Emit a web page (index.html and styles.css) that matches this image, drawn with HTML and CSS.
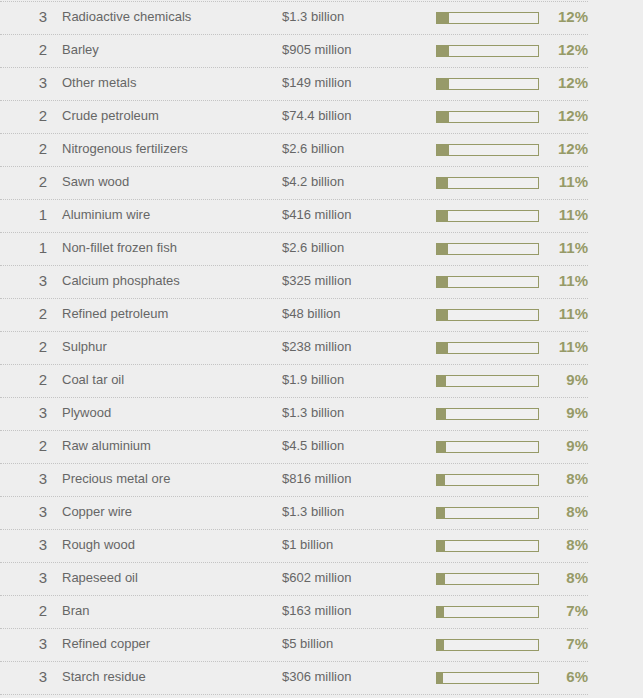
FILE: index.html
```html
<!DOCTYPE html>
<html>
<head>
<meta charset="utf-8">
<link rel="stylesheet" href="styles.css">
</head>
<body>
<div class="table">
  <div class="row"><span class="num">3</span><span class="name">Radioactive chemicals</span><span class="val">$1.3 billion</span><span class="bar"><span class="fill" style="width:12%"></span></span><span class="pct">12%</span></div>
  <div class="row"><span class="num">2</span><span class="name">Barley</span><span class="val">$905 million</span><span class="bar"><span class="fill" style="width:12%"></span></span><span class="pct">12%</span></div>
  <div class="row"><span class="num">3</span><span class="name">Other metals</span><span class="val">$149 million</span><span class="bar"><span class="fill" style="width:12%"></span></span><span class="pct">12%</span></div>
  <div class="row"><span class="num">2</span><span class="name">Crude petroleum</span><span class="val">$74.4 billion</span><span class="bar"><span class="fill" style="width:12%"></span></span><span class="pct">12%</span></div>
  <div class="row"><span class="num">2</span><span class="name">Nitrogenous fertilizers</span><span class="val">$2.6 billion</span><span class="bar"><span class="fill" style="width:12%"></span></span><span class="pct">12%</span></div>
  <div class="row"><span class="num">2</span><span class="name">Sawn wood</span><span class="val">$4.2 billion</span><span class="bar"><span class="fill" style="width:11%"></span></span><span class="pct">11%</span></div>
  <div class="row"><span class="num">1</span><span class="name">Aluminium wire</span><span class="val">$416 million</span><span class="bar"><span class="fill" style="width:11%"></span></span><span class="pct">11%</span></div>
  <div class="row"><span class="num">1</span><span class="name">Non-fillet frozen fish</span><span class="val">$2.6 billion</span><span class="bar"><span class="fill" style="width:11%"></span></span><span class="pct">11%</span></div>
  <div class="row"><span class="num">3</span><span class="name">Calcium phosphates</span><span class="val">$325 million</span><span class="bar"><span class="fill" style="width:11%"></span></span><span class="pct">11%</span></div>
  <div class="row"><span class="num">2</span><span class="name">Refined petroleum</span><span class="val">$48 billion</span><span class="bar"><span class="fill" style="width:11%"></span></span><span class="pct">11%</span></div>
  <div class="row"><span class="num">2</span><span class="name">Sulphur</span><span class="val">$238 million</span><span class="bar"><span class="fill" style="width:11%"></span></span><span class="pct">11%</span></div>
  <div class="row"><span class="num">2</span><span class="name">Coal tar oil</span><span class="val">$1.9 billion</span><span class="bar"><span class="fill" style="width:9%"></span></span><span class="pct">9%</span></div>
  <div class="row"><span class="num">3</span><span class="name">Plywood</span><span class="val">$1.3 billion</span><span class="bar"><span class="fill" style="width:9%"></span></span><span class="pct">9%</span></div>
  <div class="row"><span class="num">2</span><span class="name">Raw aluminium</span><span class="val">$4.5 billion</span><span class="bar"><span class="fill" style="width:9%"></span></span><span class="pct">9%</span></div>
  <div class="row"><span class="num">3</span><span class="name">Precious metal ore</span><span class="val">$816 million</span><span class="bar"><span class="fill" style="width:8%"></span></span><span class="pct">8%</span></div>
  <div class="row"><span class="num">3</span><span class="name">Copper wire</span><span class="val">$1.3 billion</span><span class="bar"><span class="fill" style="width:8%"></span></span><span class="pct">8%</span></div>
  <div class="row"><span class="num">3</span><span class="name">Rough wood</span><span class="val">$1 billion</span><span class="bar"><span class="fill" style="width:8%"></span></span><span class="pct">8%</span></div>
  <div class="row"><span class="num">3</span><span class="name">Rapeseed oil</span><span class="val">$602 million</span><span class="bar"><span class="fill" style="width:8%"></span></span><span class="pct">8%</span></div>
  <div class="row"><span class="num">2</span><span class="name">Bran</span><span class="val">$163 million</span><span class="bar"><span class="fill" style="width:7%"></span></span><span class="pct">7%</span></div>
  <div class="row"><span class="num">3</span><span class="name">Refined copper</span><span class="val">$5 billion</span><span class="bar"><span class="fill" style="width:7%"></span></span><span class="pct">7%</span></div>
  <div class="row"><span class="num">3</span><span class="name">Starch residue</span><span class="val">$306 million</span><span class="bar"><span class="fill" style="width:6%"></span></span><span class="pct">6%</span></div>
</div>
</body>
</html>
```

FILE: styles.css
```css
html, body {
  margin: 0;
  padding: 0;
  background: #eeeeee;
}
body {
  padding-top: 1px;
  font-family: "Liberation Sans", Arial, sans-serif;
  color: #666666;
}
.table {
  width: 588px;
  border-bottom: 1px dotted #c4c4c4;
}
.row {
  display: grid;
  grid-template-columns: 47px 235px 154px 103px 49px;
  align-items: center;
  height: 32px;
  border-top: 1px dotted #c4c4c4;
}
.num {
  text-align: right;
  font-size: 15px;
  padding-bottom: 3px;
}
.name {
  padding-left: 15px;
  font-size: 13px;
  padding-bottom: 3px;
}
.val {
  font-size: 13px;
  padding-bottom: 3px;
}
.bar {
  display: flex;
  height: 12px;
  border: 1px solid #969a67;
  box-sizing: border-box;
  background: #f0f0f0;
}
.fill {
  display: block;
  background: #979a69;
  height: 100%;
}
.pct {
  text-align: right;
  font-size: 15px;
  font-weight: bold;
  color: #969a67;
  padding-bottom: 4px;
}
```
